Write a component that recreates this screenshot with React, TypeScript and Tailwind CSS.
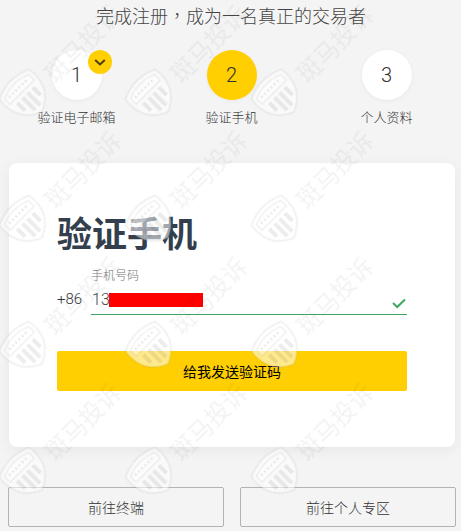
import React from "react";

const font = { fontFamily: '"Noto Sans CJK SC", "Liberation Sans", sans-serif' };

const steps = [
  { num: "1", label: "验证电子邮箱", done: true, active: false },
  { num: "2", label: "验证手机", done: false, active: true },
  { num: "3", label: "个人资料", done: false, active: false },
];

const Shield = () => (
  <svg width="50" height="50" viewBox="-25 -25 50 50" className="absolute left-[38px] top-[38px] -rotate-45 blur-[0.4px]">
    <path d="M-21 -15 Q0 -25 21 -15 Q25 13 0 24 Q-25 13 -21 -15 Z" fill="#ffffff" fillOpacity="0.55" stroke="#000000" strokeOpacity="0.05" strokeWidth="2" />
    <path d="M-17 -12 Q0 -19 17 -12 L17 -4 L-17 -4 Z" fill="#ffffff" fillOpacity="0.3" stroke="#000000" strokeOpacity="0.06" strokeWidth="1.5" />
    <path d="M-13 -9.5 L13 -9.5" stroke="#000000" strokeOpacity="0.1" strokeWidth="2" strokeDasharray="2 2.5" />
    <path d="M-11 0 L-11 11 M-3.5 0 L-3.5 18 M3.5 0 L3.5 18 M11 0 L11 11" stroke="#000000" strokeOpacity="0.075" strokeWidth="4" />
  </svg>
);

const Watermark = () => (
  <div className="absolute left-[-38px] top-[32px] grid grid-cols-[repeat(3,126px)] auto-rows-[126px] pointer-events-none">
    {Array.from({ length: 12 }).map((_, i) => (
      <div key={i} className="relative">
        <Shield />
        <span
          className="absolute left-[72px] top-[-1px] w-[96px] text-center text-[24px] leading-[24px] whitespace-nowrap -rotate-45 blur-[0.3px] text-black/[0.05]"
          style={font}
        >
          斑马投诉
        </span>
      </div>
    ))}
  </div>
);

export default function App() {
  return (
    <div className="relative w-[461px] h-[531px] overflow-hidden bg-[#f4f4f4] text-[#333]" style={font}>
      <h1 className="text-center text-[18px] leading-[30px] font-light text-[#444] ml-[1px]">
        完成注册<span className="font-['Noto_Sans_CJK_TC']">，</span>成为一名真正的交易者
      </h1>

      <div className="grid grid-cols-3 w-[465px] ml-[-1px] mt-[20px]">
        {steps.map((s) => (
          <div key={s.num} className="flex flex-col items-center">
            <div
              className={`relative w-[50px] h-[50px] rounded-full flex items-center justify-center font-['Roboto'] text-[20px] font-light shadow-[0_1px_4px_rgba(0,0,0,0.05)] ${
                s.active ? "bg-[#ffcf02]" : "bg-white"
              }`}
            >
              {s.num}
              {s.done && (
                <div className="absolute right-[-10px] top-0 w-[24px] h-[24px] rounded-full bg-[#ffcf02] flex items-center justify-center">
                  <svg width="12" height="10" viewBox="0 0 12 10" fill="none">
                    <path d="M1.2 3 L6 7.5 L10.8 3" stroke="#4a3d10" strokeWidth="2" />
                  </svg>
                </div>
              )}
            </div>
            <div className="mt-[6px] text-[13px] leading-[22px] font-light whitespace-nowrap">{s.label}</div>
          </div>
        ))}
      </div>

      <div className="mx-[9px] w-[446px] h-[284px] mt-[35px] bg-white rounded-[8px] shadow-[0_3px_14px_rgba(0,0,0,0.06)] px-[48px] pt-[46px]">
        <h2 className="text-[35px] leading-[46px] font-bold text-[#333f4d]">验证手机</h2>
        <div className="flex mt-[11px]">
          <span className="w-[34px] pt-[23px] font-['Roboto'] text-[15px] leading-[20px] font-light">+86</span>
          <div className="flex-1">
            <label className="block text-[12px] leading-[18px] font-light text-[#777]">手机号码</label>
            <div className="flex items-center h-[31px] border-b border-[#3ea862] pl-[1px] pr-[1px]">
              <span className="w-[17px] mt-[2px] font-['Roboto'] text-[16px] leading-[20px] font-light text-[#444]">13</span>
              <span className="w-[94px] h-[14px] mt-[2px] bg-[#ff0000]" />
              <svg className="ml-auto mt-[9px]" width="14" height="11" viewBox="0 0 14 11" fill="none">
                <path d="M1 5 L5.2 9 L13 1.5" stroke="#3ea862" strokeWidth="2" />
              </svg>
            </div>
          </div>
        </div>
        <button className="block w-[350px] h-[40px] mt-[36px] bg-[#ffcf02] rounded-[2px] text-[14px] text-black">给我发送验证码</button>
      </div>

      <div className="grid grid-cols-2 gap-[16px] mx-[8px] w-[448px] mt-[40px]">
        <button className="h-[40px] border border-[#b3b3b3] rounded-[2px] text-[14px] font-light text-[#333]">前往终端</button>
        <button className="h-[40px] border border-[#b3b3b3] rounded-[2px] text-[14px] font-light text-[#333]">前往个人专区</button>
      </div>

      <Watermark />
    </div>
  );
}
